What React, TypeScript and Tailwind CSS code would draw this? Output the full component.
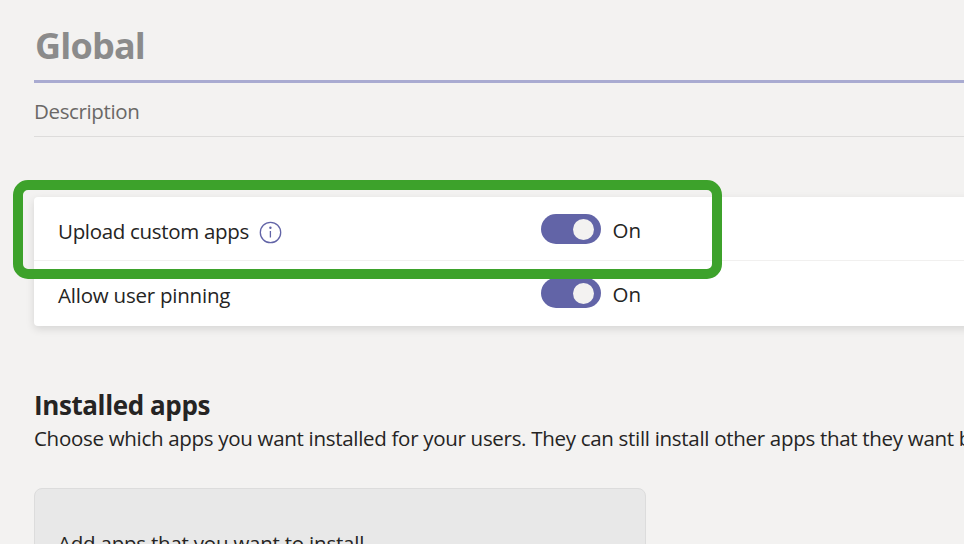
import React from "react";

function Toggle() {
  return (
    <span className="flex h-[30px] w-[60px] shrink-0 items-center justify-end rounded-full bg-[#6264a7] pr-[7px]">
      <span className="h-[21px] w-[21px] rounded-full bg-[#f3f2f1]" />
    </span>
  );
}

function InfoIcon() {
  return (
    <svg className="mt-[2px] ml-[10px] h-[23px] w-[23px]" viewBox="0 0 23 23" fill="none">
      <circle cx="11.5" cy="11.5" r="10.2" stroke="#6264a7" strokeWidth="1.3" />
      <circle cx="11.4" cy="6.8" r="1.2" fill="#6264a7" />
      <path d="M11.4 10v6.5" stroke="#6264a7" strokeWidth="1.3" />
    </svg>
  );
}

function SettingRow({ label, info = false }: { label: string; info?: boolean }) {
  return (
    <div className="flex h-16 items-start pl-6">
      <div className="flex w-[483px] items-start pt-5">
        <span className={info ? "text-[20.5px] leading-[28px] tracking-[-0.31px]" : "text-[20.5px] leading-[28px] tracking-[-0.22px]"}>{label}</span>
        {info && <span className="pt-[2px]"><InfoIcon /></span>}
      </div>
      <div className="flex items-start pt-[17px]">
        <Toggle />
        <span className="ml-[11.5px] pt-[2px] text-[20.5px] leading-[28px]">On</span>
      </div>
    </div>
  );
}

export default function App() {
  return (
    <div className="relative h-[544px] w-[964px] overflow-hidden bg-[#f3f2f1] pl-[34px] font-['Open_Sans','Noto_Sans',sans-serif] font-[370] text-[#252423]">
      <header className="flex h-[83px] items-start border-b-3 border-[#a9abd1] pt-[22px] pl-px">
        <h1 className="text-[36px] leading-[48px] font-bold tracking-[-0.8px] text-[#8b8b8b]">Global</h1>
      </header>
      <div className="flex h-[54px] items-start border-b border-[#dddcdb] pt-[14px]">
        <span className="text-[20.5px] leading-[28px] tracking-[-0.37px] text-[#6a6866]">Description</span>
      </div>

      <section className="mt-[60px] -mr-2 h-[129px] rounded-[4px] bg-white shadow-[0_3px_8px_rgba(0,0,0,0.12)]">
        <div className="h-16 border-b border-[#f1f0ef]">
          <SettingRow label="Upload custom apps" info />
        </div>
        <SettingRow label="Allow user pinning" />
      </section>

      <section className="pt-[62px]">
        <h2 className="text-[26px] leading-[34px] font-bold tracking-[-0.4px]">Installed apps</h2>
        <p className="text-[20.5px] leading-[32px] tracking-[-0.3px] whitespace-nowrap">
          Choose which apps you want installed for your users. They can still install other apps that they want by themselves.
        </p>
        <div className="mt-[34px] h-[120px] w-[612px] rounded-lg border border-[#dcdcdc] bg-[#e8e8e8] pt-[40px] pl-[23px]">
          <span className="text-[20.5px] leading-[28px] tracking-[-0.22px]">Add apps that you want to install</span>
        </div>
      </section>

      <div className="absolute top-[180px] left-[13px] h-[99px] w-[709px] rounded-[15px] border-10 border-[#3da22b]" />
    </div>
  );
}
